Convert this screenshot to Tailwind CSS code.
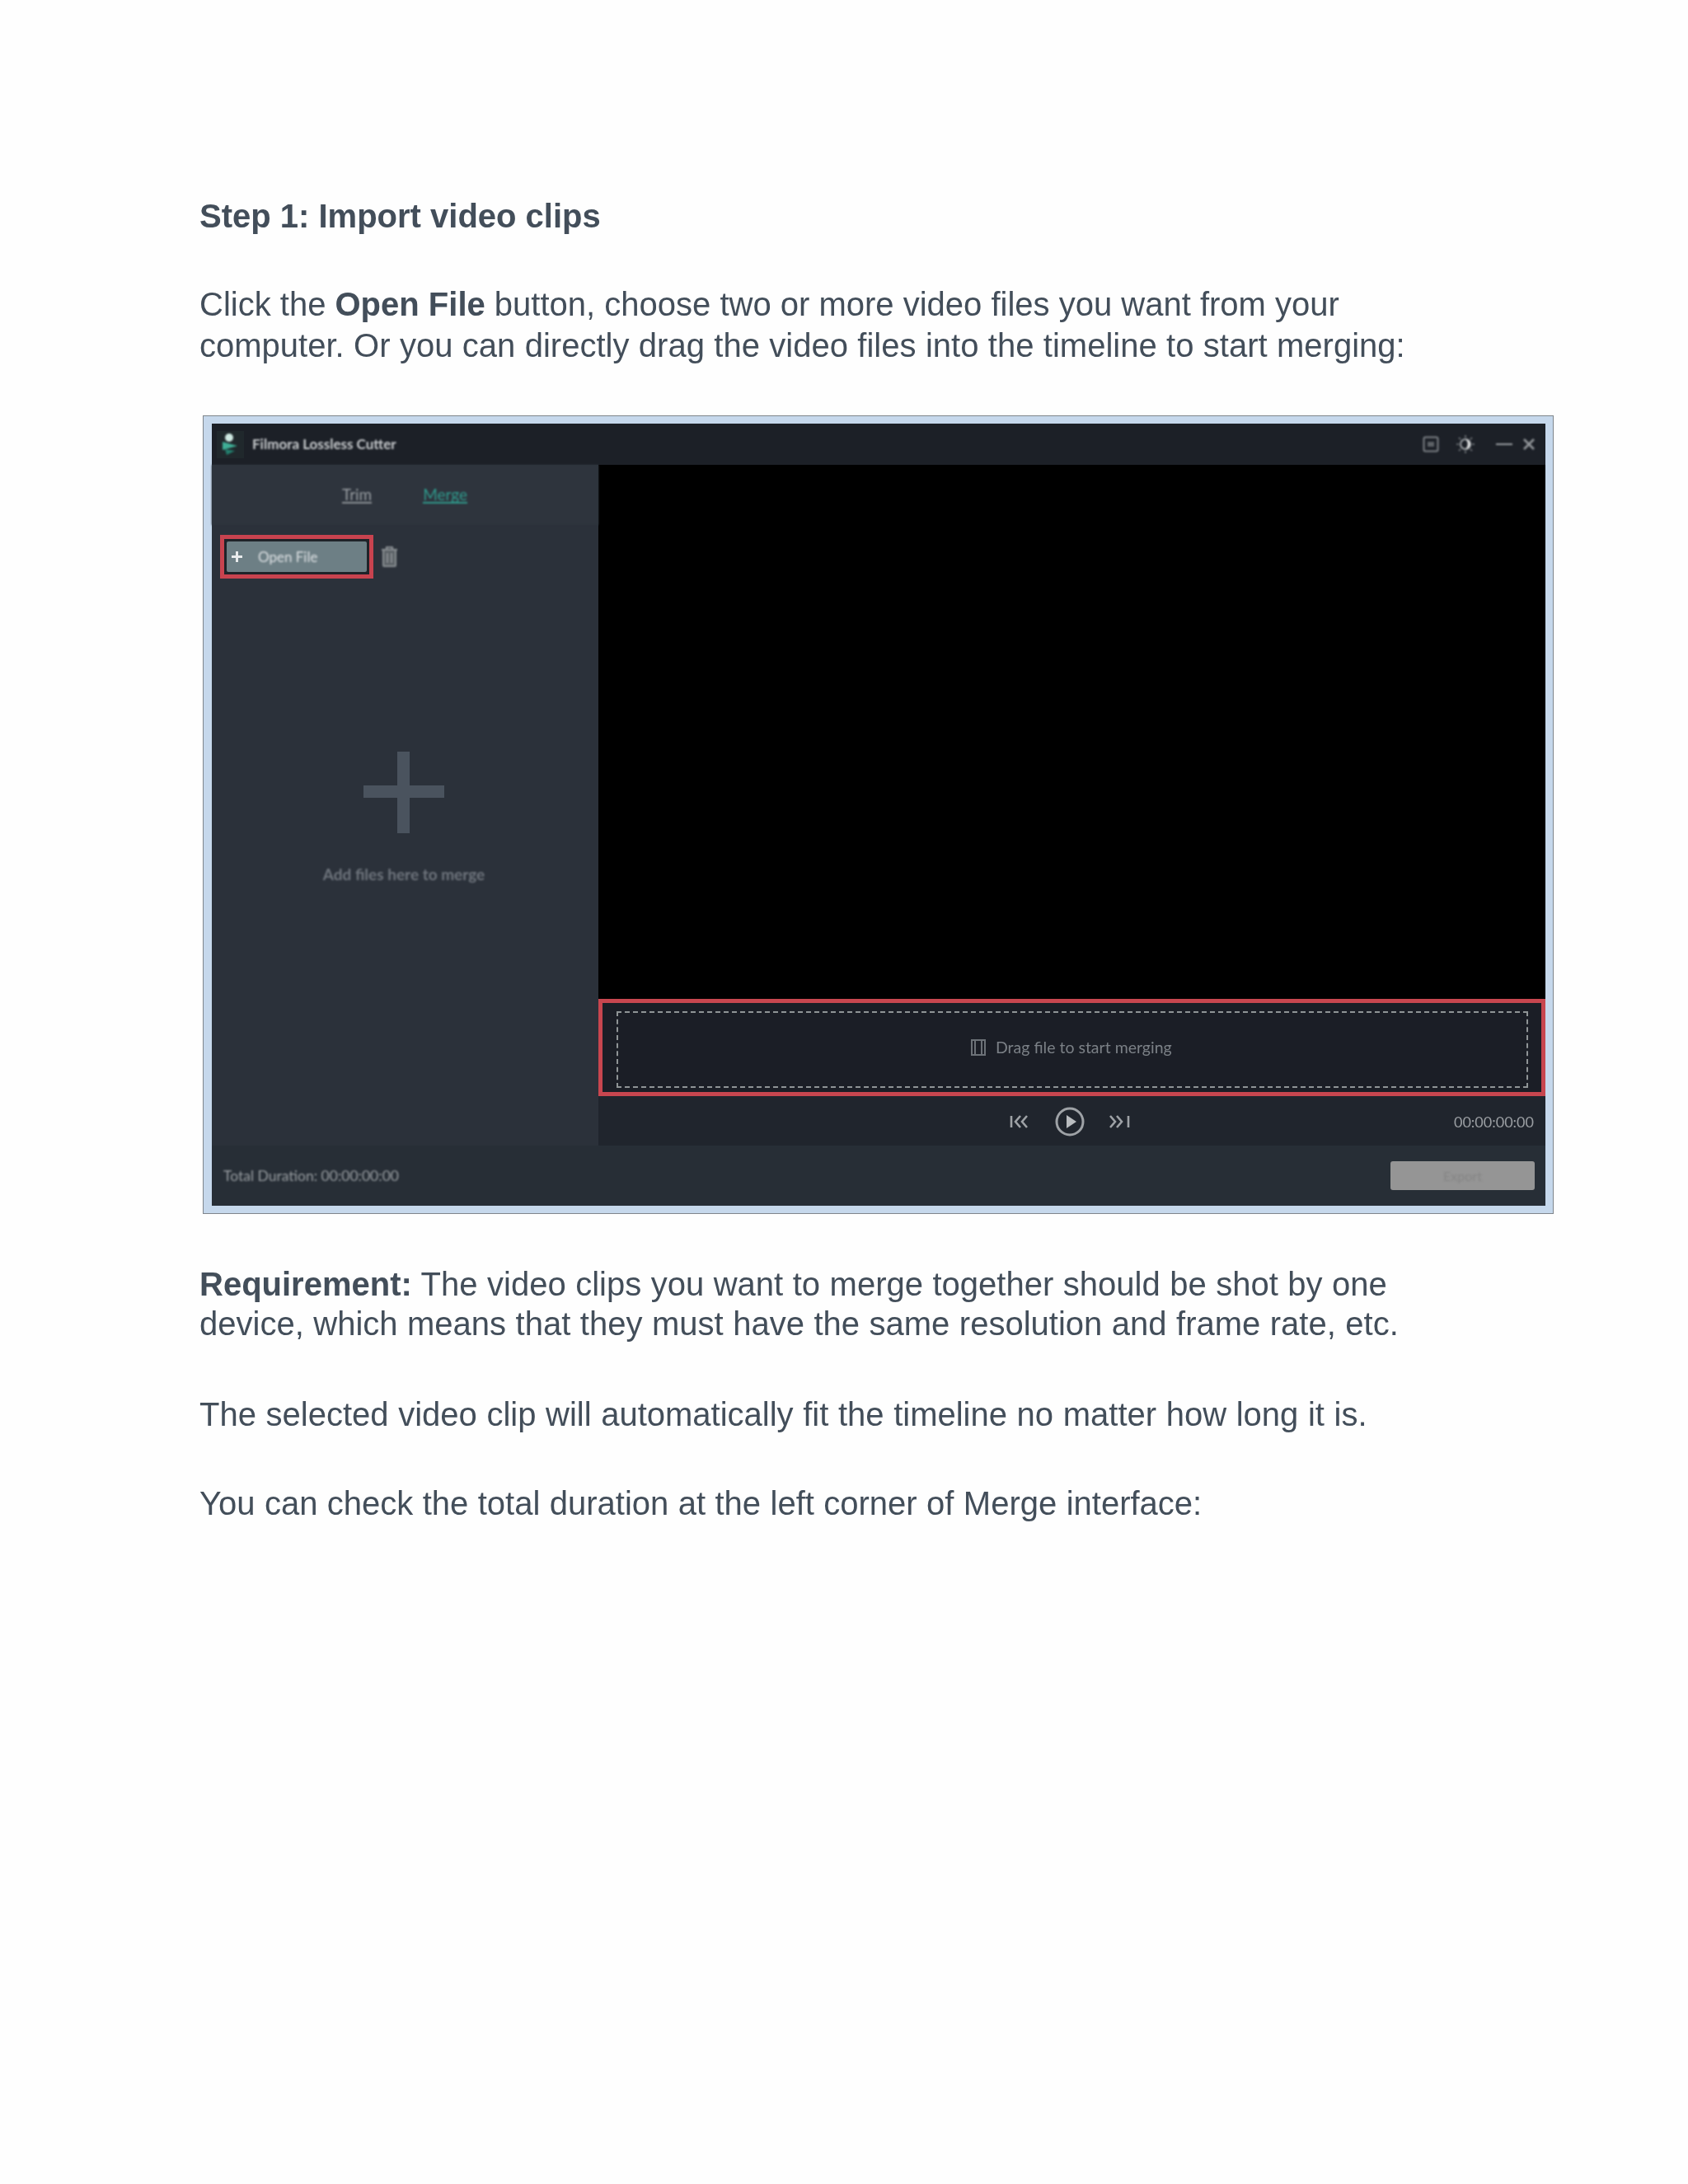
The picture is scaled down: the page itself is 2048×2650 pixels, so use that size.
<!doctype html>
<html>
<head>
<meta charset="utf-8">
<script src="https://cdn.jsdelivr.net/npm/@tailwindcss/browser@4"></script>
</head>
<body class="bg-[#fefefe]">
<main class="w-[2048px] h-[2650px] overflow-hidden pl-[242px] pt-[237px] font-['Liberation_Sans',Arial,sans-serif] text-[40px] leading-[50px] text-[#434e5a]">
  <h1 class="font-bold whitespace-nowrap blur-[0.3px]">Step 1: Import video clips</h1>
  <p class="mt-[57px] whitespace-nowrap blur-[0.3px]">
    <span class="block">Click the <b>Open File</b> button, choose two or more video files you want from your</span>
    <span class="block [word-spacing:0.3px]">computer. Or you can directly drag the video files into the timeline to start merging:</span>
  </p>

  <!-- application screenshot -->
  <section class="mt-[60px] ml-[4px] w-[1639px] h-[969px] border border-[#7f858b] bg-[#c6d8ec] pt-[9px] pb-[9px] pl-[10px] pr-[9px]">
    <div class="h-full flex flex-col bg-[#2b313a]">
      <!-- title bar -->
      <header class="h-[50px] shrink-0 flex items-center bg-[#1c2027] pl-[6px] pr-[13px]">
        <div class="w-[33px] h-[33px] bg-[#20282c] flex items-center justify-center">
          <svg class="w-[26px] h-[28px] blur-[0.8px]" viewBox="0 0 26 28"><circle cx="11" cy="6" r="5" fill="#cfe9e2"/><path d="M3 11l18 5-18 5z" fill="#3fae96"/><path d="M6 20l12 2-10 5z" fill="#23806f"/></svg>
        </div>
        <span class="ml-[10px] font-['Lato',sans-serif] font-bold text-[17px] leading-[20px] text-[#c8cbce] blur-[0.9px] whitespace-nowrap">Filmora Lossless Cutter</span>
        <div class="ml-auto flex items-center blur-[0.9px]">
          <svg class="w-[20px] h-[20px]" viewBox="0 0 20 20" fill="none" stroke="#7d8186" stroke-width="2"><rect x="1.5" y="1.5" width="17" height="17" rx="2"/><rect x="6" y="7" width="8" height="6" fill="#5d6166" stroke="none"/></svg>
          <svg class="ml-[20px] w-[24px] h-[24px]" viewBox="0 0 24 24" fill="none"><circle cx="12" cy="12" r="6" stroke="#9ea2a6" stroke-width="2"/><path d="M12 6a6 6 0 010 12 8 8 0 000-12z" fill="#e3e4e5"/><path d="M12 1v3M12 20v3M1 12h3M20 12h3M4 4l2 2M18 18l2 2M4 20l2-2M18 6l2-2" stroke="#7d8186" stroke-width="1.6"/></svg>
          <div class="ml-[25px] w-[20px] h-[2px] bg-[#9a9ea2]"></div>
          <svg class="ml-[13px] w-[14px] h-[14px]" viewBox="0 0 14 14" stroke="#92969a" stroke-width="2.6"><path d="M1 1l12 12M13 1L1 13"/></svg>
        </div>
      </header>

      <div class="flex-1 min-h-0 flex">
        <!-- left panel -->
        <aside class="w-[469px] shrink-0 flex flex-col bg-[#2b313a]">
          <nav class="h-[73px] shrink-0 flex items-center pl-[158px] gap-[62px] bg-[#2e343d] font-['Lato',sans-serif] text-[19px] blur-[1px]">
            <span class="text-[#9a9fa3] border-b-2 border-[#8d9296] leading-[18px]">Trim</span>
            <span class="text-[#2f9a8c] border-b-2 border-[#2f9a8c] leading-[18px]">Merge</span>
          </nav>
          <div class="mt-[12px] ml-[10px] flex items-center">
            <div class="w-[186px] h-[53px] border-[5px] border-[#c8434f] bg-[#1f2329] p-[3px]">
              <div class="h-full rounded-[2px] bg-[#6d7f85] flex items-center pl-[6px]">
                <svg class="w-[13px] h-[13px] blur-[0.7px]" viewBox="0 0 13 13" stroke="#e8ebec" stroke-width="3"><path d="M6.5 0v13M0 6.5h13"/></svg>
                <span class="ml-[19px] font-['Lato',sans-serif] text-[17px] leading-[20px] text-[#dde1e3] blur-[0.9px] whitespace-nowrap">Open File</span>
              </div>
            </div>
            <svg class="ml-[9px] w-[21px] h-[27px] blur-[0.8px]" viewBox="0 0 21 27" fill="none" stroke="#8b9094" stroke-width="2"><path d="M1 5h19M7 5V2h7v3"/><rect x="3" y="5" width="15" height="20" rx="1" fill="#5b6166"/><path d="M8 9v12M13 9v12"/></svg>
          </div>
          <div class="mt-[210px] pr-[3px] flex flex-col items-center">
            <div class="relative w-[98px] h-[99px] blur-[0.6px]">
              <div class="absolute left-[41px] top-0 w-[15px] h-full bg-[#4a535e]"></div>
              <div class="absolute left-0 top-[41px] w-full h-[15px] bg-[#4a535e]"></div>
            </div>
            <p class="mt-[38px] font-['Lato',sans-serif] font-bold text-[19px] leading-[24px] text-[#6f757d] blur-[0.9px] whitespace-nowrap">Add files here to merge</p>
          </div>
        </aside>

        <!-- right panel -->
        <div class="flex-1 min-w-0 flex flex-col bg-[#20252d]">
          <div class="flex-1 bg-black"></div>
          <div class="h-[118px] shrink-0 border-[5px] border-[#c8464f] bg-[#1b1e26] pt-[10px] pb-[5px] pl-[17px] pr-[16px]">
            <div class="h-full border-2 border-dashed border-[#8f9496] flex items-center pl-[427px] pb-[5px] blur-[0.4px]">
              <svg class="w-[20px] h-[20px]" viewBox="0 0 20 20" fill="none" stroke="#6c7177" stroke-width="2"><rect x="2" y="1" width="16" height="18"/><path d="M6 1v18M14 1v18"/></svg>
              <span class="ml-[11px] font-['Lato',sans-serif] text-[19.5px] leading-[24px] text-[#7b8086] blur-[0.5px] whitespace-nowrap">Drag file to start merging</span>
            </div>
          </div>
          <div class="h-[60px] shrink-0 flex items-center pl-[499px] pr-[14px] pt-[2px] blur-[0.6px]">
            <svg class="w-[24px] h-[18px]" viewBox="0 0 24 18" fill="none" stroke="#9ea2a6" stroke-width="2.6"><path d="M2 2v14M13 2L7 9l6 7M21 2l-6 7 6 7"/></svg>
            <svg class="ml-[31px] w-[36px] h-[36px]" viewBox="0 0 36 36"><circle cx="18" cy="18" r="16" fill="none" stroke="#9ea2a6" stroke-width="3"/><path d="M14 10l12 8-12 8z" fill="#b9bcbf"/></svg>
            <svg class="ml-[28px] w-[28px] h-[18px]" viewBox="0 0 28 18" fill="none" stroke="#9ea2a6" stroke-width="2.6"><path d="M3 2l6 7-6 7M11 2l6 7-6 7M25 2v14"/></svg>
            <span class="ml-auto font-['Lato',sans-serif] text-[18px] leading-[20px] text-[#9a9ea2] blur-[0.5px] whitespace-nowrap">00:00:00:00</span>
          </div>
        </div>
      </div>

      <!-- footer -->
      <footer class="h-[73px] shrink-0 flex items-center bg-[#272e36] pl-[14px] pr-[13px]">
        <span class="font-['Lato',sans-serif] text-[17.5px] leading-[20px] text-[#989da1] blur-[0.9px] whitespace-nowrap">Total Duration: 00:00:00:00</span>
        <button class="ml-auto w-[175px] h-[35px] rounded-[3px] bg-[#959595] text-[16px] leading-[20px] font-['Lato',sans-serif] text-[#858585]"><span class="blur-[1px]">Export</span></button>
      </footer>
    </div>
  </section>

  <p class="mt-[60px] whitespace-nowrap blur-[0.3px]">
    <span class="block [word-spacing:0.4px]"><b>Requirement:</b> The video clips you want to merge together should be shot by one</span>
    <span class="block -mt-[2px] [word-spacing:0.4px]">device, which means that they must have the same resolution and frame rate, etc.</span>
  </p>
  <p class="mt-[60px] whitespace-nowrap blur-[0.3px] [word-spacing:0.5px]">The selected video clip will automatically fit the timeline no matter how long it is.</p>
  <p class="mt-[58px] whitespace-nowrap blur-[0.3px] [word-spacing:0.3px]">You can check the total duration at the left corner of Merge interface:</p>
</main>
</body>
</html>
